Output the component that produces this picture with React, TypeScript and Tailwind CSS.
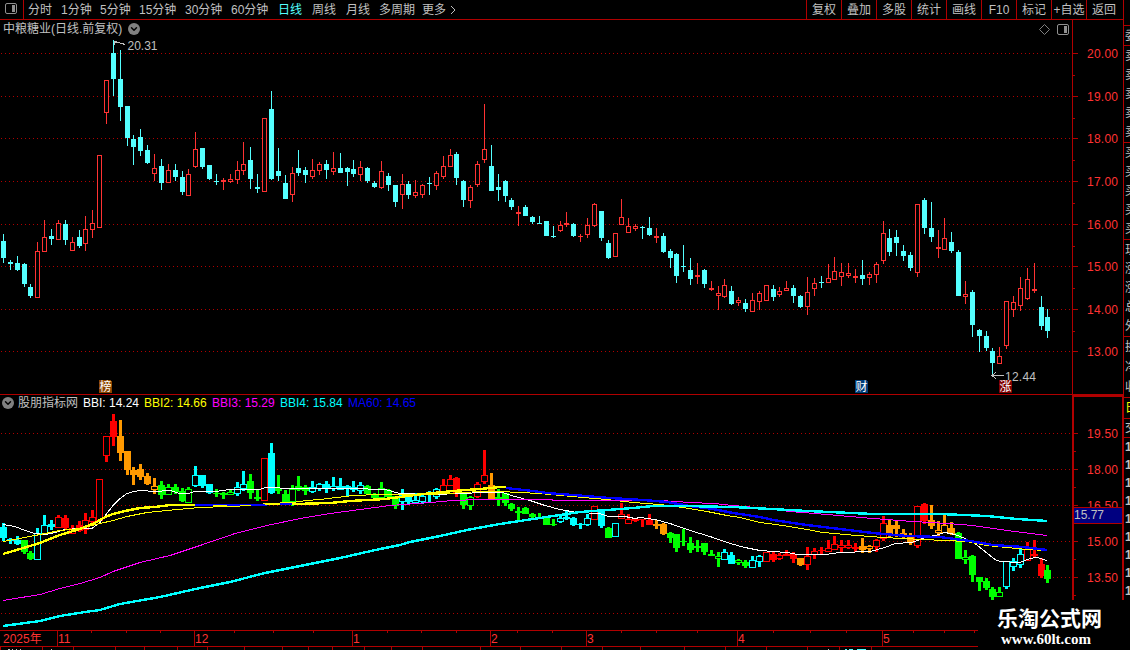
import React from 'react';
import { ChevronDown } from 'lucide-react';

const RED = '#b00000';
const UP = '#ff3232';
const DOWN = '#54ffff';

const periods = [
  { label: '分时', width: 'w-[33px]' },
  { label: '1分钟', width: 'w-[39px]' },
  { label: '5分钟', width: 'w-[39px]' },
  { label: '15分钟', width: 'w-[46px]' },
  { label: '30分钟', width: 'w-[46px]' },
  { label: '60分钟', width: 'w-[47px]' },
  { label: '日线', width: 'w-[34px]', active: true },
  { label: '周线', width: 'w-[34px]' },
  { label: '月线', width: 'w-[33px]' },
  { label: '多周期', width: 'w-[43px]' },
  { label: '更多', width: 'w-[28px]' },
];

const actions = ['复权', '叠加', '多股', '统计', '画线', 'F10', '标记', '+自选', '返回'];

const indicators = [
  { label: 'BBI: 14.24', cls: 'w-[61px] text-white' },
  { label: 'BBI2: 14.66', cls: 'w-[68px] text-[#ffff00]' },
  { label: 'BBI3: 15.29', cls: 'w-[68px] text-[#ff00ff]' },
  { label: 'BBI4: 15.84', cls: 'w-[68px] text-[#00ffff]' },
  { label: 'MA60: 14.65', cls: 'w-[70px] text-[#0000ff]' },
];

// kind (u = up, d = down), then high, body top, body bottom, low
const raw = `
d234 241 258 263|d260 262 264 270|d256 263 270 271|d263 264 284 287|d284 287 296 298
u242 251 298 298|u220 237 252 252|d229 236 239 245|u220 223 240 240|d220 224 240 245
u237 242 251 251|d230 237 246 248|u216 229 244 251|u210 223 230 238|u155 155 228 228
u80 80 113 124|d40 53 79 96|d50 79 107 121|d106 106 138 146|d135 139 147 165
d129 137 151 156|d145 150 163 164|u154 168 174 181|d159 166 183 190|u164 170 183 183
d164 170 177 181|d171 177 192 195|u169 174 196 196|u132 149 167 168|d148 148 167 169
d165 165 179 180|d174 181 182 185|u178 180 182 190|u174 179 182 183|u161 170 180 184
u142 164 171 175|d147 160 179 189|d174 187 189 193|u118 118 192 192|d91 109 179 180
d148 171 176 181|d175 183 199 199|u167 173 195 202|d150 168 173 176|d167 170 175 183
u159 170 177 179|u162 164 171 175|d160 164 170 179|u152 168 172 175|d153 168 173 173
d167 168 172 186|d160 169 174 177|u161 167 175 181|d167 168 181 183|d181 183 187 188
u161 171 188 189|d173 176 185 191|d185 185 202 207|u174 184 195 209|d181 184 195 199
u180 192 196 198|u184 185 195 198|d177 183 184 195|u171 173 186 190|u156 166 177 179
u149 155 167 167|d152 154 178 185|d180 181 200 207|u185 187 201 208|u161 164 185 187
u104 149 160 163|d145 166 191 191|d174 187 190 201|d180 181 196 202|d198 200 207 210
u206 212 214 226|d205 207 216 216|d216 217 222 224|d216 223 224 224|d221 221 236 236
d226 236 237 238|u221 225 231 232|u212 223 225 227|d223 224 236 237|u234 236 237 242
u218 225 235 238|u203 204 226 227|d211 211 238 241|d240 243 258 259|u233 233 257 257
u199 217 225 225|u218 226 233 233|u224 226 229 231|d226 227 228 239|d217 228 235 236
u228 236 238 243|d233 236 252 253|d249 251 258 268|d253 254 276 283|d245 266 267 272
d258 270 279 285|u263 275 277 284|d269 270 284 288|u281 288 290 291|u286 293 296 310
u279 285 297 298|d286 291 304 305|u297 300 303 306|d299 303 309 312|u293 300 312 312
u291 293 302 310|u285 285 301 301|d285 289 297 301|u287 291 295 297|u281 288 291 291
d285 288 296 303|d295 296 307 308|u277 292 307 315|u278 283 289 296|d276 282 283 288
u264 278 283 283|u257 271 280 280|u263 272 277 286|u263 273 276 278|u269 276 278 283
d260 275 279 285|u272 274 278 285|u262 264 275 283|u221 233 261 264|d229 238 252 256
d230 237 243 256|d245 251 256 261|d252 255 268 271|u204 204 273 277|d198 200 228 234
d202 228 237 242|u230 247 249 258|u218 238 250 250|d232 242 251 253|d250 252 296 296
u281 294 297 304|d290 292 325 337|d329 330 336 352|d331 336 348 351|d348 351 363 374
u347 356 364 364|u301 301 346 349|u296 302 310 317|u277 288 306 311|u268 279 299 300
u263 289 291 293|d296 307 326 330|d309 317 331 338`;

const tones =
  'CCCGGCCCRRRRRRRRROOOOOOGGGGGCCCGGGCCGGRCGGGGGCCCCCCCCGGGGGCC' +
  'CCCCRRRGGRROGGGGGGGGGCCCCCRCGCRRRRROOGGGGGGGGCCGGCCRRRRRORRR' +
  'RRRRROORROOOORROOOOGGGGGGGCCCRRRG';

const toneColor: Record<string, string> = { R: '#ff0000', O: '#ff9900', G: '#00ff00', C: '#00ffff' };

const candles = raw
  .trim()
  .split(/[|\n]/)
  .map((row, i) => {
    const [high, top, bottom, low] = row.slice(1).split(' ').map(Number);
    return { up: row[0] === 'u', x: Math.round(2.93 + i * 6.872), high, top, bottom, low };
  });

// the lower pane shows the same prices on a flatter scale
const flat = (y: number) => Math.round(421.2 + (y - 53) * 0.5634);

const curves = [
  {
    color: '#ffffff',
    width: 1,
    points:
      '3,524 15,526 25,530 35,533 45,534 55,532 65,529 80,528 92,528 100,522 106,514 113,505 120,498 127,493 134,491 140,490 155,491 170,490 180,493 188,493 195,491 215,491 230,489 260,489 265,487 275,487 285,488 350,488 385,489 400,493 430,494 465,493 480,492 502,492 515,496 530,500 545,505 560,509 577,512 600,513 608,516 625,516 635,518 640,517 655,519 670,523 690,530 710,536 730,543 745,547 760,550 787,552 798,554 825,554 840,552 870,551 885,547 895,543 912,542 925,537 935,535 945,532 955,534 965,538 975,543 985,551 995,559 1000,561 1020,562 1030,558 1037,557 1047,560',
  },
  {
    color: '#ffff00',
    width: 1,
    points:
      '3,541 20,538 40,534 60,530 80,528 100,523 113,520 127,516 147,512 167,510 200,507 227,506 253,505 267,503 293,502 307,500 320,499 353,495 380,494 430,494 480,491 500,491 540,493 583,497 607,499 633,502 660,504 683,507 707,511 727,515 740,517 760,522 783,525 807,529 823,532 857,535 883,537 923,539 967,541 987,545 1007,547 1027,549 1047,550',
  },
  {
    color: '#ff00ff',
    width: 1,
    points:
      '3,600 40,594 60,588 80,583 100,577 113,571 140,562 170,555 200,545 235,533 267,525 300,518 330,513 360,509 390,505 430,502 453,500 480,499 550,499 555,500 660,500 690,502 714,503 733,505 755,507 790,511 827,514 873,518 913,521 947,523 973,525 1007,530 1047,535',
  },
  {
    color: '#ffff00',
    width: 2.4,
    points:
      '3,554 20,549 40,543 60,535 80,529 95,523 103,518 113,514 125,511 140,508 155,507 170,505 195,505',
  },
  { color: '#0000ff', width: 2, points: '195,505 267,505' },
  { color: '#ffff00', width: 1, points: '213,505 227,505' },
  { color: '#ffff00', width: 1, points: '240,505 251,505' },
  {
    color: '#ffff00',
    width: 2.4,
    points:
      '265,504 295,504 330,503 350,501 385,499 400,497 423,494 453,491 480,489 500,487 506,487',
  },
  { color: '#0000ff', width: 2, points: '280,504 292,504' },
  {
    color: '#0000ff',
    width: 2.4,
    points:
      '506,488 533,491 547,493 573,495 597,497 610,498 643,500 667,502 690,506 713,509 733,513 760,517 773,520 807,525 840,529 873,533 907,536 940,537 970,541 993,545 1023,547 1047,550',
  },
  {
    color: '#00ffff',
    width: 2.4,
    points:
      '3,626 40,621 60,616 85,612 100,610 120,604 160,597 200,588 230,582 265,573 300,566 340,558 380,549 400,545 410,542 440,536 467,530 500,524 533,519 560,515 580,512 607,510 633,508 653,506 683,506 733,507 753,508 807,511 873,514 940,514 987,516 1017,519 1047,521',
  },
];

const priceMarks: [number, string][] = [
  [53, '20.00'],
  [96, '19.00'],
  [138, '18.00'],
  [181, '17.00'],
  [224, '16.00'],
  [266, '15.00'],
  [309, '14.00'],
  [351, '13.00'],
];

const lowerMarks: [number, string][] = [
  [433, '19.50'],
  [469, '18.00'],
  [505, '16.50'],
  [541, '15.00'],
  [577, '13.50'],
];

const months: [number, string][] = [
  [57, '11'],
  [194, '12'],
  [352, '1'],
  [490, '2'],
  [586, '3'],
  [737, '4'],
  [882, '5'],
];

const weekTicks = [91, 126, 160, 234, 273, 313, 387, 421, 456, 517, 552, 621, 656, 697, 773, 810, 846, 913, 944, 974];
const footTicks = [0, 42, 73, 115, 144, 177, 207, 244, 282, 308, 332, 364, 391, 422, 480, 520, 561, 602, 640, 684, 725, 766, 807, 839, 871];

const news = [
  { x: 99, char: '榜', color: '#8b4500' },
  { x: 855, char: '财', color: '#003c78' },
  { x: 999, char: '涨', color: '#800000' },
];

const quoteGroups = [
  { rows: ['委'], cls: 'h-[20px] text-[#c0c0c0]' },
  { rows: ['卖', '卖', '卖', '卖', '卖'], cls: 'h-[97px] text-[#c0c0c0]' },
  { rows: ['买', '买', '买', '买', '买'], cls: 'h-[97px] text-[#c0c0c0]' },
  { rows: ['现', '涨', '涨', '总', '外'], cls: 'h-[97px] text-[#c0c0c0]' },
  { rows: ['换', '净', '收'], cls: 'h-[61px] text-[#c0c0c0]' },
  { rows: ['日'], cls: 'h-[21px] text-[#ffff00]' },
  { rows: ['交'], cls: 'h-[19px] text-[#c0c0c0]' },
];

const PanelIcon: React.FC = () => (
  <svg width="12" height="11" viewBox="0 0 12 11">
    <rect x="0.5" y="0.5" width="11" height="10" rx="1.500" fill="none" stroke="#909090" />
    <rect x="7" y="2" width="3" height="7" fill="#909090" />
  </svg>
);

const RoundChevron: React.FC = () => (
  <span className="flex h-3 w-3 shrink-0 items-center justify-center rounded-full bg-[#808080]">
    <ChevronDown size={10} strokeWidth={3.5} className="text-black" />
  </span>
);

const GridLines: React.FC<{ rows: number[] }> = ({ rows }) => (
  <>
    {rows.map((y) => (
      <line key={y} x1="1" x2="1072" y1={y + 0.5} y2={y + 0.5} stroke="#b00000" strokeDasharray="1 3" />
    ))}
  </>
);

const PriceChart: React.FC = () => (
  <svg width="1072" height="356" viewBox="0 38 1072 356" shapeRendering="crispEdges" className="block">
    <GridLines rows={priceMarks.map(([y]) => y)} />
    {candles.map(({ up, x, high, top, bottom, low }, i) => {
      const color = up ? UP : DOWN;
      const hollow = up && bottom - top > 2;
      return (
        <g key={i} fill={color}>
          <rect x={x} y={high} width="1" height={low - high} />
          <rect x={x - 2} y={top} width="5" height={bottom - top} />
          {hollow && <rect x={x - 1} y={top + 1} width="3" height={bottom - top - 2} fill="#000" />}
        </g>
      );
    })}
    <path d="M114 45v-4h3M115 42h3l2 1h2l3 2" fill="none" stroke="#c0c0c0" />
    <path d="M992 375.500h12M996 372l-4 3.500l4 3.500" fill="none" stroke="#c0c0c0" />
    <text x="127.500" y="50" fill="#c0c0c0" fontSize="12">20.31</text>
    <text x="1005" y="381" fill="#c0c0c0" fontSize="12" textLength="31">12.44</text>
    {news.map(({ x, char, color }) => (
      <g key={char}>
        <path d={`M${x} 380h11l2 2v11h-13z`} fill={color} />
        <text x={x + 0.5} y="391" fill="#fff" fontSize="12">{char}</text>
      </g>
    ))}
  </svg>
);

const IndicatorChart: React.FC = () => (
  <svg width="1072" height="218" viewBox="0 412 1072 218" shapeRendering="crispEdges" className="block">
    <GridLines rows={[433, 469, 505, 541, 577, 613]} />
    {candles.map(({ up, x, high, top, bottom, low }, i) => {
      const y1 = flat(top);
      const y2 = bottom - top <= 1 ? y1 + 1 : flat(bottom) + 1;
      const h1 = flat(high);
      const h2 = flat(low) + 1;
      return (
        <g key={i} fill={toneColor[tones[i]]}>
          {high < top && <rect x={x - 1} y={h1} width="3" height={y1 - h1} />}
          {low > bottom && <rect x={x - 1} y={y2} width="3" height={Math.max(h2 - y2, 0)} />}
          <rect x={x - 3} y={y1} width="7" height={y2 - y1} />
          {up && y2 - y1 > 2 && <rect x={x - 2} y={y1 + 1} width="5" height={y2 - y1 - 2} fill="#000" />}
        </g>
      );
    })}
    {curves.map((c, i) => (
      <polyline
        key={i}
        points={c.points}
        fill="none"
        stroke={c.color}
        strokeWidth={c.width}
        transform={c.width === 1 ? 'translate(0 0.5)' : undefined}
      />
    ))}
  </svg>
);

const PriceAxis: React.FC = () => (
  <svg width="51" height="374" viewBox="1072 20 51 374" shapeRendering="crispEdges" className="block">
    <rect x="1072" y="20" width="1" height="374" fill={RED} />
    {priceMarks.map(([y, label]) => (
      <g key={label}>
        <rect x="1073" y={y} width="5" height="1" fill={RED} />
        <rect x="1073" y={y + 22} width="2" height="1" fill={y < 351 ? RED : '#000'} />
        <text x="1087" y={y + 5} fill={UP} fontSize="12" textLength="31">{label}</text>
      </g>
    ))}
  </svg>
);

const IndicatorAxis: React.FC = () => (
  <svg width="51" height="235" viewBox="1072 395 51 235" shapeRendering="crispEdges" className="block">
    <rect x="1073" y="396" width="50" height="240" fill="none" stroke={RED} strokeWidth="2" />
    {lowerMarks.map(([y, label]) => (
      <g key={label}>
        <rect x="1074" y={y} width="4" height="1" fill={RED} />
        <rect x="1074" y={y + 18} width="2" height="1" fill={RED} />
        <text x="1087" y={y + 5} fill={UP} fontSize="12" textLength="31">{label}</text>
      </g>
    ))}
    <rect x="1074" y="507" width="48" height="17" fill={RED} />
    <rect x="1074" y="508" width="48" height="15" fill="#000080" />
    <text x="1074" y="519" fill="#c0c0c0" fontSize="12" textLength="30">15.77</text>
  </svg>
);

const Timeline: React.FC = () => (
  <svg width="1124" height="20" viewBox="0 630 1124 20" shapeRendering="crispEdges" className="block">
    <rect x="0" y="630" width="1124" height="1" fill={RED} />
    <rect x="0" y="646" width="1124" height="1" fill={RED} />
    <text x="3" y="643" fill={UP} fontSize="12">2025年</text>
    {months.map(([x, label]) => (
      <g key={label}>
        <rect x={x} y="631" width="1" height="15" fill={RED} />
        <text x={x + 1} y="643" fill={UP} fontSize="12">{label}</text>
      </g>
    ))}
    {weekTicks.map((x) => (
      <rect key={x} x={x} y="631" width="1" height="2" fill={RED} />
    ))}
    {footTicks.map((x) => (
      <rect key={x} x={x} y="647" width="1" height="3" fill={RED} />
    ))}
    <path d="M8 649.500h2M12 649.500h1M16 649.500h1M20 649.500h1M51 649.500h1M828 649.500h1" stroke="#c0c0c0" />
    <path d="M845 649.500h2M849 649.500h4M857 649.500h9" stroke={DOWN} />
  </svg>
);

const QuoteStrip: React.FC = () => (
  <aside className="flex min-w-0 flex-1 flex-col overflow-hidden pt-[25px]">
    {quoteGroups.map((group, i) => (
      <div key={i} className={`flex shrink-0 flex-col justify-around overflow-hidden border-t border-[#b00000] pl-px ${group.cls}`}>
        {group.rows.map((char, j) => (
          <span key={j} className="w-3">{char}</span>
        ))}
      </div>
    ))}
    <div className="flex h-[163px] shrink-0 flex-col justify-around border-t border-[#b00000] pl-px font-bold text-[#c0c0c0]">
      {Array.from({ length: 9 }, (_, i) => (
        <span key={i} className="w-3">1</span>
      ))}
    </div>
  </aside>
);

const App: React.FC = () => {
  return (
    <div className="relative flex h-[650px] w-[1130px] overflow-hidden bg-black font-['Liberation_Sans','Noto_Sans_CJK_SC',sans-serif] text-[12px] leading-none whitespace-nowrap text-[#c0c0c0]">
      <main className="flex w-[1124px] shrink-0 flex-col border-r border-[#b00000]">
        <nav className="flex h-5 shrink-0 border-b border-[#b00000]">
          <div className="flex w-6 items-center border-r border-[#b00000] pb-0.5 pl-[5px]">
            <PanelIcon />
          </div>
          <div className="flex flex-1 items-center pl-1">
            {periods.map((p) => (
              <span key={p.label} className={`${p.width} ${p.active ? 'text-[#54ffff]' : ''}`}>
                {p.label}
              </span>
            ))}
            <svg width="6" height="10" viewBox="0 0 6 10" fill="none" stroke="#c0c0c0">
              <path d="M1 1l4 4l-4 4" />
            </svg>
          </div>
          <div className="flex">
            {actions.map((a) => (
              <span
                key={a}
                className="flex w-[35px] items-center justify-center border-l border-[#b00000] last:w-[37px] last:pr-0.5"
              >
                {a}
              </span>
            ))}
          </div>
        </nav>

        <section className="flex h-[375px] shrink-0 border-b border-[#b00000]">
          <div className="flex w-[1072px] flex-col">
            <header className="flex h-[18px] shrink-0 items-center pl-[3px]">
              <span className="w-[125px]">中粮糖业(日线.前复权)</span>
              <RoundChevron />
              <div className="ml-auto flex items-center gap-[7px] pr-[3px]">
                <svg width="11" height="11" viewBox="0 0 11 11" fill="none" stroke="#808080">
                  <path d="M5.500 .5l5 5l-5 5l-5-5z" />
                </svg>
                <PanelIcon />
              </div>
            </header>
            <PriceChart />
          </div>
          <PriceAxis />
        </section>

        <section className="flex h-[235px] shrink-0">
          <div className="flex w-[1072px] flex-col">
            <header className="flex h-[17px] shrink-0 items-center pb-0.5 pl-0.5">
              <RoundChevron />
              <span className="ml-1 w-[65px]">股朋指标网</span>
              {indicators.map((item) => (
                <span key={item.label} className={item.cls}>{item.label}</span>
              ))}
            </header>
            <IndicatorChart />
          </div>
          <IndicatorAxis />
        </section>

        <Timeline />
      </main>

      <QuoteStrip />

      <div className="absolute right-0 bottom-0 flex h-[50px] w-[152px] flex-col items-center bg-black pt-[7px] pr-[9px] text-white">
        <span className="text-[21px] leading-[24px] font-bold">乐淘公式网</span>
        <span className="mr-[7px] font-['Liberation_Serif',serif] text-[15px] leading-4 font-bold">www.60lt.com</span>
      </div>
    </div>
  );
};

export default App;
